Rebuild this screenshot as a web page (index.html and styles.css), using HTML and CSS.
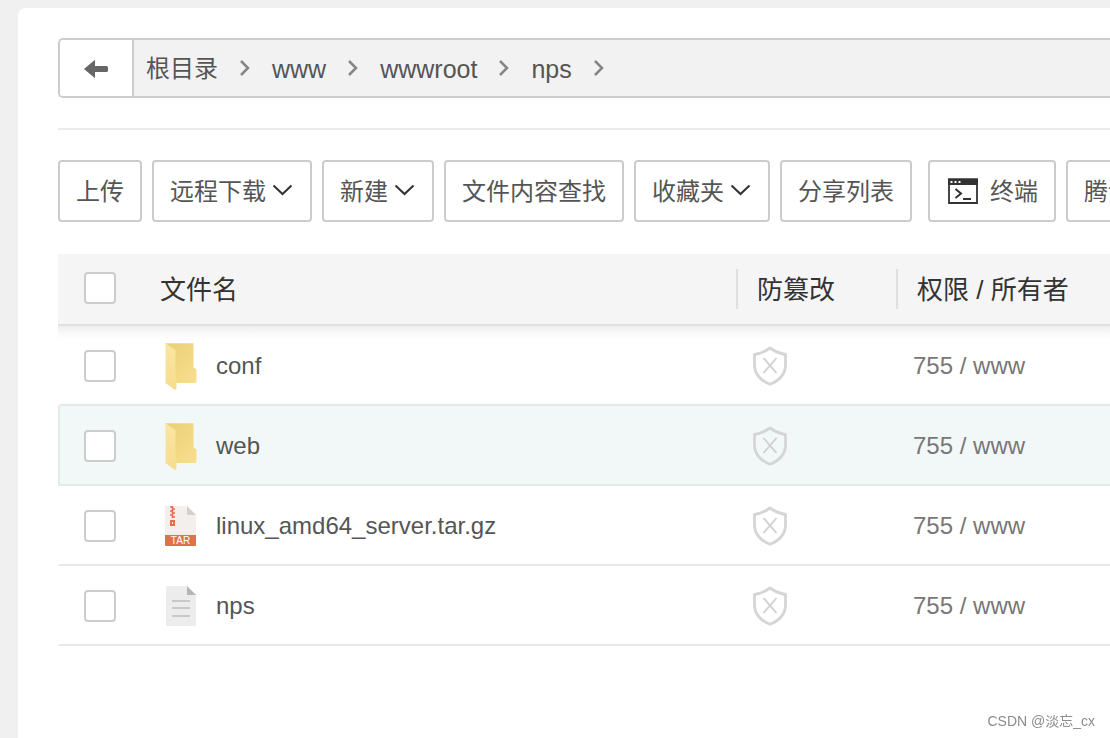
FILE: index.html
```html
<!DOCTYPE html>
<html lang="zh-CN">
<head>
<meta charset="utf-8">
<title>文件管理</title>
<link rel="stylesheet" href="styles.css">
</head>
<body>
<svg class="sprite" aria-hidden="true">
  <defs>
    <linearGradient id="folder-back" x1="0" y1="0" x2="1" y2="1">
      <stop offset="0" stop-color="#ebcf78"/><stop offset="1" stop-color="#f8df8c"/>
    </linearGradient>
    <linearGradient id="folder-front" x1="0" y1="0" x2="0" y2="1">
      <stop offset="0" stop-color="#fae6a2"/><stop offset="1" stop-color="#f7dd8c"/>
    </linearGradient>
    <symbol id="sep" viewBox="0 0 10 16"><path d="M1 1 8 8 1 15" fill="none" stroke="#858585" stroke-width="2.500"/></symbol>
    <symbol id="down" viewBox="0 0 22 14"><path d="M1.500 2.500 10.500 11 19.500 2.500" fill="none" stroke="#333" stroke-width="2"/></symbol>
    <symbol id="folder" viewBox="0 0 34 50">
      <path d="M1.5 2.3H29.5V26.5L32.5 28.5V41L32 42H11z" fill="url(#folder-back)"/>
      <path d="M1.5 2.3 11.5 9V36.500L12.500 38V47.500L11 49 1.500 42z" fill="url(#folder-front)"/>
    </symbol>
    <symbol id="tar" viewBox="0 0 34 50">
      <path d="M1 5H23L32 14V35H1z" fill="#f2efed"/>
      <path d="M23 5 32 14H23z" fill="#d5d0cc"/>
      <path d="M6 6H9M8 8H11M6 10H9M8 12H11M6 14H9M8 16H11M8.500 5V17" fill="none" stroke="#e0714a" stroke-width="1.600"/>
      <path d="M6 19H11V25H6z M8 21V23H9V21z" fill="#e0714a" fill-rule="evenodd"/>
      <path d="M1 34H32V44Q32 45 31 45H2Q1 45 1 44z" fill="#e0714a"/>
      <text x="16.500" y="43" text-anchor="middle" class="icon-label">TAR</text>
    </symbol>
    <symbol id="file" viewBox="0 0 34 50">
      <path d="M3 5H23L32 14V44Q32 45 31 45H3Q2 45 2 44V6Q2 5 3 5z" fill="#ececec"/>
      <path d="M23 5 32 14H23z" fill="#b5b5b5"/>
      <path d="M8 20H26M8 27H26M8 35H26" stroke="#c8c8c8" stroke-width="2"/>
    </symbol>
    <symbol id="shield" viewBox="0 0 36 40">
      <path d="M18 2Q25 7 33.500 8.500V19C33.500 28 27 35 18 38.200C9 35 2.500 28 2.500 19V8.500Q11 7 18 2z" fill="none" stroke="#d5d5d5" stroke-width="2.800" stroke-linejoin="round"/>
      <path d="M11.500 12 24.500 27M24.500 12 11.500 27" stroke="#cfcfcf" stroke-width="1.900"/>
    </symbol>
  </defs>
</svg>

<main class="panel">
  <nav class="path" aria-label="路径">
    <button class="back" type="button" aria-label="返回">
      <svg width="24" height="20" viewBox="0 0 24 20"><path d="M0 10 11 .8V7H22.500Q24 7 24 8.500V11.500Q24 13 22.500 13H11V19.200z" fill="#666"/></svg>
    </button>
    <div class="crumbs">
      <a class="root" href="#">根目录</a><svg class="sep"><use href="#sep"/></svg>
      <a href="#">www</a><svg class="sep"><use href="#sep"/></svg>
      <a href="#">wwwroot</a><svg class="sep"><use href="#sep"/></svg>
      <a href="#">nps</a><svg class="sep"><use href="#sep"/></svg>
    </div>
  </nav>

  <div class="toolbar">
    <div class="group">
      <button class="btn" type="button">上传</button>
      <button class="btn" type="button">远程下载<svg class="down"><use href="#down"/></svg></button>
      <button class="btn" type="button">新建<svg class="down"><use href="#down"/></svg></button>
      <button class="btn" type="button">文件内容查找</button>
      <button class="btn" type="button">收藏夹<svg class="down"><use href="#down"/></svg></button>
      <button class="btn" type="button">分享列表</button>
    </div>
    <div class="group">
      <button class="btn btn-terminal" type="button">
        <svg class="terminal" viewBox="0 0 32 28">
          <path d="M3 2.500H31V26H3z" fill="#fff" stroke="#333" stroke-width="1.800"/>
          <path d="M2 1.500H32V8H2z" fill="#333"/>
          <path d="M4.500 5h2M8.500 5h2M12.500 5h2" stroke="#fff" stroke-width="2"/>
          <path d="M9.500 12 15 16.500 9.500 21M17 22H25" fill="none" stroke="#333" stroke-width="2"/>
        </svg>终端</button>
      <button class="btn" type="button">腾讯云COS</button>
    </div>
  </div>

  <table class="files">
    <colgroup><col class="c-check"><col><col class="c-lock"><col class="c-owner"></colgroup>
    <thead>
      <tr>
        <th class="check"><input type="checkbox" aria-label="全选"></th>
        <th>文件名</th>
        <th class="divided">防篡改</th>
        <th class="divided">权限 / 所有者</th>
      </tr>
    </thead>
    <tbody>
      <tr class="before-active">
        <td class="check"><input type="checkbox" aria-label="选择 conf"></td>
        <td class="name"><a href="#"><svg class="icon"><use href="#folder"/></svg>conf</a></td>
        <td><svg class="shield"><use href="#shield"/></svg></td>
        <td class="owner">755 / www</td>
      </tr>
      <tr class="active">
        <td class="check"><input type="checkbox" aria-label="选择 web"></td>
        <td class="name"><a href="#"><svg class="icon"><use href="#folder"/></svg>web</a></td>
        <td><svg class="shield"><use href="#shield"/></svg></td>
        <td class="owner">755 / www</td>
      </tr>
      <tr>
        <td class="check"><input type="checkbox" aria-label="选择 linux_amd64_server.tar.gz"></td>
        <td class="name"><a href="#"><svg class="icon"><use href="#tar"/></svg>linux_amd64_server.tar.gz</a></td>
        <td><svg class="shield"><use href="#shield"/></svg></td>
        <td class="owner">755 / www</td>
      </tr>
      <tr>
        <td class="check"><input type="checkbox" aria-label="选择 nps"></td>
        <td class="name"><a href="#"><svg class="icon"><use href="#file"/></svg>nps</a></td>
        <td><svg class="shield"><use href="#shield"/></svg></td>
        <td class="owner">755 / www</td>
      </tr>
    </tbody>
  </table>
</main>
<div class="watermark">CSDN @淡忘_cx</div>
</body>
</html>
```

FILE: styles.css
```css
* { box-sizing: border-box; }

body {
  margin: 0;
  min-height: 100vh;
  display: flex;
  flex-direction: column;
  padding: 8px 0 0 18px;
  overflow-x: hidden;
  background: #f0f0f0;
  color: #555;
  font-family: "Liberation Sans", "Noto Sans CJK SC", sans-serif;
  font-size: 24px;
}

button { font: inherit; color: inherit; cursor: pointer; }
a { color: inherit; text-decoration: none; }
svg { display: block; flex: none; }

.sprite { position: absolute; width: 0; height: 0; }
.icon-label { fill: #fff; font-size: 10px; }

.panel {
  flex: 1;
  padding: 30px 0 40px 40px;
  background: #fff;
  border-top-left-radius: 8px;
  overflow: hidden;
}

/* Path bar */
.path {
  display: flex;
  height: 60px;
  border: 2px solid #ccc;
  border-right: 0;
  border-radius: 5px 0 0 5px;
  background: #f2f2f2;
  overflow: hidden;
}
.back {
  display: flex;
  align-items: center;
  justify-content: center;
  width: 74px;
  padding: 2px 0 0;
  border: 0;
  border-right: 2px solid #ccc;
  background: #fff;
}
.crumbs {
  display: flex;
  align-items: center;
  padding: 2px 0 0 12px;
  font-size: 25px;
  line-height: 36px;
}
.root { font-size: 24px; }
.sep { width: 10px; height: 16px; margin: 0 22px 2px; }

/* Toolbar */
.toolbar {
  display: flex;
  gap: 16px;
  margin: 30px 0 32px;
  padding-top: 30px;
  border-top: 2px solid #ebebeb;
}
.group { display: flex; flex: none; gap: 10px; }
.btn {
  display: flex;
  align-items: center;
  gap: 6px;
  height: 62px;
  padding: 0 16px 4px;
  border: 2px solid #ccc;
  border-radius: 4px;
  background: #fff;
  white-space: nowrap;
}
.btn-terminal { gap: 12px; }
.down { width: 22px; height: 14px; margin-top: 2px; }
.terminal { width: 32px; height: 28px; margin-top: 4px; }

/* File list */
.files {
  width: 100%;
  table-layout: fixed;
  border-collapse: separate;
  border-spacing: 0;
}
.c-check { width: 82px; }
.c-lock { width: 160px; }
.c-owner { width: 214px; }

th {
  height: 72px;
  padding: 0 0 4px 20px;
  border-bottom: 2px solid #e0e0e0;
  background: #f5f5f5;
  color: #333;
  font-size: 26px;
  font-weight: 400;
  text-align: left;
  white-space: nowrap;
}
.divided {
  padding-left: 21px;
  background: #f5f5f5 linear-gradient(#e0e0e0, #e0e0e0) left center / 2px 40px no-repeat;
}
td {
  height: 80px;
  padding: 2px 0 0 16px;
  border-bottom: 2px solid #e8e8e8;
  color: #777;
}
.owner { padding-left: 17px; }
.name { padding-left: 24px; }
.name a {
  display: flex;
  align-items: center;
  gap: 18px;
  color: #555;
}
th.check { padding: 0 0 2px 26px; }
td.check { padding-left: 24px; border-left: 2px solid transparent; }

/* Shadow that the header casts on the first row */
tbody tr:first-child td {
  background: linear-gradient(#eeeeee, #f9f9f9 50%, #ffffff) top / 100% 14px no-repeat;
  background-clip: border-box;
  background-origin: border-box;
}

.before-active td, .active td { border-bottom-color: #e2ebe8; }
.active td { background: #f2f8f7; }
.active td.check { border-left-color: #e2ebe8; }

input[type="checkbox"] {
  appearance: none;
  display: block;
  width: 32px;
  height: 32px;
  margin: 0;
  border: 2px solid #ccc;
  border-radius: 4px;
  background: #fff;
}
.icon { width: 34px; height: 50px; }
.shield { width: 36px; height: 40px; }

.watermark {
  position: fixed;
  right: 15px;
  bottom: 7px;
  color: #8c8c8c;
  font-size: 14px;
  line-height: 20px;
}
```
